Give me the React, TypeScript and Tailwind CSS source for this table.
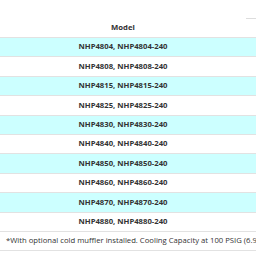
import React from "react";

const models = ["4804", "4808", "4815", "4825", "4830", "4840", "4850", "4860", "4870", "4880"];

const App: React.FC = () => {
  return (
    <div className="w-[256px] h-[256px] overflow-hidden bg-white font-['Open_Sans',sans-serif] text-[7.7px] text-[#333]">
      <div className="h-[18px]" />

      {/* Header row */}
      <div className="flex w-[420px] h-[19px]">
        <div className="w-[246px] flex items-center justify-center font-bold">Model</div>
        <div className="flex-1 border-t border-[#ddd]" />
      </div>

      {/* Body rows */}
      <div className="w-[420px]">
        {models.map((m, i) => (
          <div
            key={m}
            className={`flex h-[19.4px] border-t border-[#e2e2e2] ${i % 2 === 0 ? "bg-[#ccffff]" : "bg-white"}`}
          >
            <div className="w-[246px] flex items-center justify-center font-bold">
              NHP{m}, NHP{m}-240
            </div>
          </div>
        ))}
        <div className="flex items-center h-[20px] border-y border-[#e2e2e2] pl-[6px] whitespace-nowrap">
          *With optional cold muffler installed. Cooling Capacity at 100 PSIG (6.9 bar)
        </div>
      </div>
    </div>
  );
};

export default App;
